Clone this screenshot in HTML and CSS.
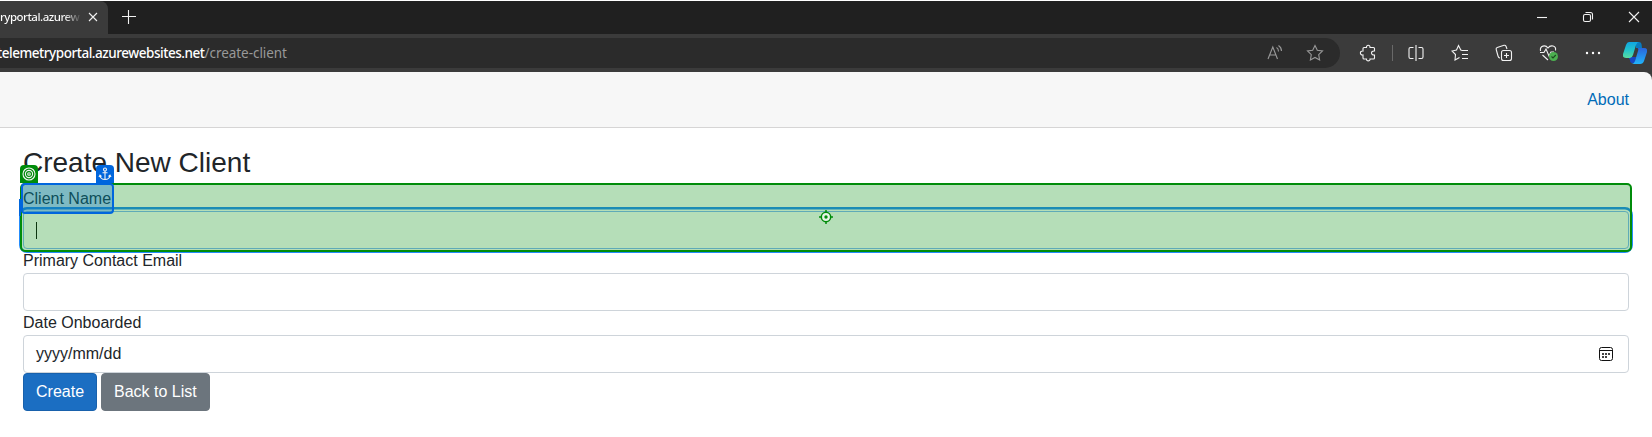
FILE: index.html
```html
<!DOCTYPE html>
<html lang="en">
<head>
<meta charset="utf-8">
<title>Create New Client</title>
<link rel="stylesheet" href="styles.css">
</head>
<body>
<header class="browser">
  <div class="tabstrip">
    <div class="tab"><span class="tab-title">ryportal.azurew</span>
      <svg class="tab-close" width="10" height="10" viewBox="0 0 10 10"><path d="M1 1l8 8M9 1l-8 8"/></svg>
    </div>
    <svg class="newtab" width="16" height="16" viewBox="0 0 16 16"><path d="M1 7.500h14M7.500 1v14"/></svg>
    <div class="window-controls">
      <svg width="12" height="12" viewBox="0 0 12 12"><path d="M1 6.500h10"/></svg>
      <svg width="12" height="12" viewBox="0 0 12 12"><rect x="1.500" y="3.500" width="7" height="7" rx="1.500"/><path d="M3.500 1.500h5q2 0 2 2v5"/></svg>
      <svg width="12" height="12" viewBox="0 0 12 12"><path d="M1 1l10 10M11 1L1 11"/></svg>
    </div>
  </div>
  <div class="toolbar">
    <div class="address">
      <div class="url">telemetryportal.azurewebsites.net<span>/create-client</span></div>
      <svg width="18" height="18" viewBox="0 0 18 18"><path d="M2 15L6.800 3L11.500 15M3.500 11h6.500M10.500 3.500q2 1 2 4M12.500 1.500q3 2 3 5.500"/></svg>
      <svg width="18" height="18" viewBox="0 0 18 18"><path d="M9 1.500l2.300 4.800 5.200.7-3.800 3.600.9 5.400L9 13.500 4.400 16l.9-5.400L1.500 7l5.200-.7z"/></svg>
    </div>
    <div class="tools">
      <svg width="18" height="18" viewBox="0 0 18 18"><path d="M5 3.500h2.500C7 .5 11.500.5 11 3.500h3.500q1 0 1 1V7c-4-.5-4 4.500 0 4v3q0 1-1 1H11c.5 2.500-4 2.500-3.500 0H5q-1 0-1-1v-3C.5 11.500.5 6.500 4 7V4.500q0-1 1-1z"/></svg>
      <i class="divider"></i>
      <svg width="18" height="18" viewBox="0 0 18 18"><path d="M6.500 3.500h-3q-1.500 0-1.500 1.500v8q0 1.500 1.500 1.500h3M11.500 3.500h3q1.500 0 1.500 1.500v8q0 1.500-1.500 1.500h-3M9 1v16"/></svg>
      <svg width="18" height="18" viewBox="0 0 18 18"><path d="M11 6.500h6M11 10.500h6M11 14.500h6M11 6.500L9.800 6 7.500 1.500 5.500 6 1 7l3.500 3.500L4 16l4.500-2.500"/></svg>
      <svg width="18" height="18" viewBox="0 0 18 18"><rect x="6.500" y="6.500" width="10" height="10" rx="2"/><path d="M11.500 9v5M9 11.500h5M5 14q-1.500 0-2-2L1.200 5.500q-.4-1.500 1-2L9 1.300q1.500-.3 2 1L12 5"/></svg>
      <svg class="health" width="20" height="18" viewBox="0 0 20 18"><path d="M1.500 7C.5 1.500 6.500.5 9 4c2.500-3.500 8.500-2.500 7.500 2.500M1 8.500h4L7 5l3 7 2-4h3M3.500 11L9 16"/><circle cx="14.500" cy="12.500" r="4.500"/><path class="check" d="M12.500 12.500l1.500 1.500 2.800-3"/></svg>
      <svg class="dots" width="16" height="18" viewBox="0 0 16 18"><circle cx="2" cy="9" r="1.200"/><circle cx="8" cy="9" r="1.200"/><circle cx="14" cy="9" r="1.200"/></svg>
    </div>
    <svg class="copilot" width="24" height="24" viewBox="0 0 24 24">
      <defs>
        <linearGradient id="g1" x1="0" y1="0" x2="0" y2="1"><stop stop-color="#10a5e2"/><stop offset=".5" stop-color="#22c3cb"/><stop offset="1" stop-color="#59dca0"/></linearGradient>
        <linearGradient id="g2" x1="0" y1="0" x2="0" y2="1"><stop stop-color="#2b65db"/><stop offset="1" stop-color="#20b4fb"/></linearGradient>
      </defs>
      <path fill="#1646c5" d="M5 16h8l-1 6H9q-2 0-2-3z"/>
      <path fill="#087bc0" d="M13 1h3q2 0 2.500 2l.5 4h-6z"/>
      <path fill="url(#g1)" d="M6 1h10q-2 0-3 3l-3 10q-1 3-3 3H3q-4 0-3-4L3 4q1-3 3-3z"/>
      <path fill="url(#g2)" d="M16 7h5q4 0 3 4l-3 9q-1 3-4 3H8q3 0 4-3l3-10q1-3-1-3z"/>
    </svg>
  </div>
</header>
<div class="page">
  <nav class="navbar"><a class="about">About</a></nav>
  <main class="content">
    <h1>Create New Client</h1>
    <form class="form">
      <div class="field picked">
        <label>Client Name</label>
        <div class="input focused"><i class="caret"></i></div>
        <div class="target">
          <svg class="crosshair" width="14" height="14" viewBox="0 0 14 14"><circle cx="7" cy="7" r="4.700"/><circle class="dot" cx="7" cy="7" r="1.700"/><path d="M7 0v3M7 11v3M0 7h3M11 7h3"/></svg>
        </div>
        <div class="tag tag-target"><svg width="14" height="14" viewBox="0 0 14 14"><circle cx="7" cy="7" r="6"/><circle cx="7" cy="7" r="3.600"/><circle cx="7" cy="7" r="1.300"/></svg></div>
        <div class="edge"></div>
        <div class="anchor"></div>
        <div class="tag tag-anchor"><svg width="14" height="14" viewBox="0 0 14 14"><circle cx="7" cy="2.500" r="1.500"/><path d="M7 4v8.500M4.500 5.800h5M2 8.500q.5 4 5 4t5-4M1 10l1-1.800 1.500 1.300M13 10l-1-1.800-1.500 1.300"/></svg></div>
      </div>
      <div class="field">
        <label>Primary Contact Email</label>
        <div class="input"></div>
      </div>
      <div class="field">
        <label>Date Onboarded</label>
        <div class="input date"><span>yyyy/mm/dd</span>
          <svg width="14" height="14" viewBox="0 0 14 14"><rect x=".5" y=".5" width="13" height="13" rx="2"/><path d="M.5 3.500h13"/><path class="days" d="M3 7h2M6 7h2M9 7h2M3 10h2M6 10h2"/></svg>
        </div>
      </div>
      <div class="actions"><button type="button" class="btn primary">Create</button><button type="button" class="btn secondary">Back to List</button></div>
    </form>
  </main>
</div>
</body>
</html>
```
FILE: styles.css
```css
* { box-sizing: border-box; }
body { margin: 0; height: 437px; overflow: hidden; background: #fff; color: #212529; font: 16px/24px "Liberation Sans", Arial, sans-serif; }
svg { display: block; flex: none; fill: none; stroke: #f2f2f2; stroke-width: 1.1; }
.browser { padding-top: 1px; font-family: "Noto Sans", "Open Sans", sans-serif; color: #fff; }
.tabstrip { height: 33px; display: flex; align-items: center; background: #202020; padding-bottom: 1px; }
.tab { width: 108px; height: 33px; align-self: flex-start; display: flex; align-items: center; background: #3b3b3b; border-radius: 0 8px 0 0; padding-bottom: 1px; }
.tab-title { width: 80px; margin-right: 8px; white-space: nowrap; font-size: 11.5px; font-weight: 500; letter-spacing: -.5px; line-height: 20px; background: linear-gradient(90deg, #fff 64px, rgba(255,255,255,.1) 80px); background-clip: text; -webkit-background-clip: text; color: transparent; }
.newtab { margin-left: 13px; }
.window-controls { margin-left: auto; margin-right: 12px; display: flex; gap: 34px; }
.toolbar { height: 38px; display: flex; align-items: center; background: #3b3b3b; padding-right: 5px; }
.address { width: 1340px; height: 30px; display: flex; align-items: center; background: #2b2b2b; border-radius: 0 15px 15px 0; padding-right: 16px; }
.address svg { stroke: #999; margin-left: 22px; }
.url { flex: 1; margin-left: -3px; font-size: 13.5px; font-weight: 500; letter-spacing: -.46px; line-height: 20px; white-space: nowrap; }
.url span { color: #999; font-weight: 400; letter-spacing: -.05px; }
.tools { display: flex; align-items: center; margin-left: 19px; gap: 26px; }
.divider { width: 1px; height: 16px; background: #696969; margin: 0 -12px 0 -11px; }
.health circle { fill: #4caf50; stroke: none; }
.health .check { stroke: #1d481f; }
.dots circle { fill: #fff; stroke: none; }
.copilot { margin-left: auto; stroke: none; }
.page { background: linear-gradient(#3b3b3b 9px, #fff 9px); }
.navbar { height: 56px; background: #f7f7f7; border-bottom: 1px solid #d6d5d5; border-radius: 0 8px 0 0; display: flex; justify-content: flex-end; align-items: center; padding-right: 23px; }
.about { color: #006bb7; }
.content { padding: 17.600px 23px 0; }
h1 { margin: 0 0 7.800px; font-size: 28px; line-height: 33.600px; font-weight: 400; }
.field { position: relative; }
label { display: block; height: 24px; }
.input { height: 38px; border: 1px solid #ced4da; border-radius: 4px; background: #fff; display: flex; align-items: center; padding: 0 12px; }
.focused { border-color: #86b7fe; box-shadow: 0 0 0 1.600px #fff, 0 0 0 4px #258cfb; }
.caret { width: 1px; height: 17px; margin-top: 2px; background: #111; }
.date { justify-content: space-between; padding-right: 15px; }
.date svg { stroke: #111; stroke-width: 1; }
.date .days { stroke-width: 2; stroke: #444; }
.actions { display: flex; gap: 4px; }
.btn { height: 38px; border: 1px solid; border-radius: 4px; padding: 0 12px; font: inherit; color: #fff; }
.primary { background: #1b6ec2; border-color: #1861ac; }
.secondary { background: #6c757d; border-color: #6c757d; }
.target { position: absolute; inset: -4px -3px -3px; border: 2px solid #008c0a; border-radius: 5px; background: rgba(0,140,10,.29); display: grid; place-items: center; }
.crosshair { stroke: #008c0a; stroke-width: 1.500; }
.crosshair circle { fill: #e5f4e5; }
.crosshair .dot { fill: #008c0a; stroke: none; }
.anchor { position: absolute; left: -2px; top: -4px; width: 93px; height: 31px; border: 2px solid #0066dd; border-radius: 4px; background: rgba(0,102,221,.3); }
.tag { position: absolute; top: -22px; width: 18px; height: 18px; display: grid; place-items: center; }
.tag-target { left: -3px; background: #008c0a; border-radius: 4px 4px 0 0; }
.tag-anchor { left: 73px; background: #0066dd; border-radius: 4px 4px 0 0; }
.edge { position: absolute; left: -4px; top: 12px; width: 2px; height: 17px; background: #0066dd; }
```
